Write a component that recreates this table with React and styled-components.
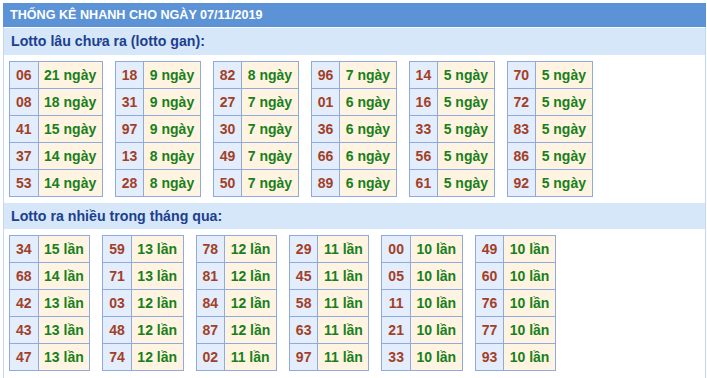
import React from 'react';
import styled, { createGlobalStyle } from 'styled-components';

const GlobalStyle = createGlobalStyle`
    body {
        margin: 0;
        background: #ffffff;
        font-family: "Liberation Sans", Arial, sans-serif;
    }
`

const Frame = styled.div`
    margin: 3px 1px 0 3px;
    border-left: 1px solid #c3d7f0;
    border-right: 1px solid #c3d7f0;
    min-height: 375px;
    box-sizing: border-box;
`

const Header = styled.div`
    height: 24px;
    line-height: 24px;
    margin: 0 -1px;
    padding-left: 7px;
    background: #5b93d6;
    color: #ffffff;
    font-size: 12.6px;
    font-weight: bold;
`

const SectionTitle = styled.div`
    height: ${p => p.first ? '27px' : '26px'};
    line-height: ${p => p.first ? '27px' : '26px'};
    padding-left: 7px;
    background: #d6e7fa;
    color: #1c3f8e;
    font-size: 14.2px;
    font-weight: bold;
    margin-top: ${p => p.first ? '1px' : '0'};
`

const Tables = styled.div`
    display: flex;
    align-items: flex-start;
    gap: 12px;
    padding: 6px 6px 6px 5px;
`

const Table = styled.table`
    border-collapse: collapse;
    font-size: 14px;
    font-weight: bold;
`

const NumCell = styled.td`
    height: 26px;
    padding: 0 6px;
    border: 1px solid #8fabdd;
    background: #e3edfb;
    color: #a23f28;
    text-align: center;
`

const ValCell = styled.td`
    height: 26px;
    padding: 0 5.5px;
    border: 1px solid #8fabdd;
    background: #fff4e2;
    color: #18801a;
    white-space: nowrap;
`

const gan = [
    [["06", 21], ["08", 18], ["41", 15], ["37", 14], ["53", 14]],
    [["18", 9], ["31", 9], ["97", 9], ["13", 8], ["28", 8]],
    [["82", 8], ["27", 7], ["30", 7], ["49", 7], ["50", 7]],
    [["96", 7], ["01", 6], ["36", 6], ["66", 6], ["89", 6]],
    [["14", 5], ["16", 5], ["33", 5], ["56", 5], ["61", 5]],
    [["70", 5], ["72", 5], ["83", 5], ["86", 5], ["92", 5]],
];

const nhieu = [
    [["34", 15], ["68", 14], ["42", 13], ["43", 13], ["47", 13]],
    [["59", 13], ["71", 13], ["03", 12], ["48", 12], ["74", 12]],
    [["78", 12], ["81", 12], ["84", 12], ["87", 12], ["02", 11]],
    [["29", 11], ["45", 11], ["58", 11], ["63", 11], ["97", 11]],
    [["00", 10], ["05", 10], ["11", 10], ["21", 10], ["33", 10]],
    [["49", 10], ["60", 10], ["76", 10], ["77", 10], ["93", 10]],
];

const StatTable = ({ rows, unit }) => (
    <Table>
        <tbody>
            {rows.map(([num, count], i) => (
                <tr key={i}>
                    <NumCell>{num}</NumCell>
                    <ValCell>{count} {unit}</ValCell>
                </tr>
            ))}
        </tbody>
    </Table>
)

const App = () => {
    return (
        <>
            <GlobalStyle />
            <Frame>
                <Header>THỐNG KÊ NHANH CHO NGÀY 07/11/2019</Header>
                <SectionTitle first>Lotto lâu chưa ra (lotto gan):</SectionTitle>
                <Tables>
                    {gan.map((rows, i) => <StatTable key={i} rows={rows} unit="ngày" />)}
                </Tables>
                <SectionTitle>Lotto ra nhiều trong tháng qua:</SectionTitle>
                <Tables>
                    {nhieu.map((rows, i) => <StatTable key={i} rows={rows} unit="lần" />)}
                </Tables>
            </Frame>
        </>
    );
}

export default App;
